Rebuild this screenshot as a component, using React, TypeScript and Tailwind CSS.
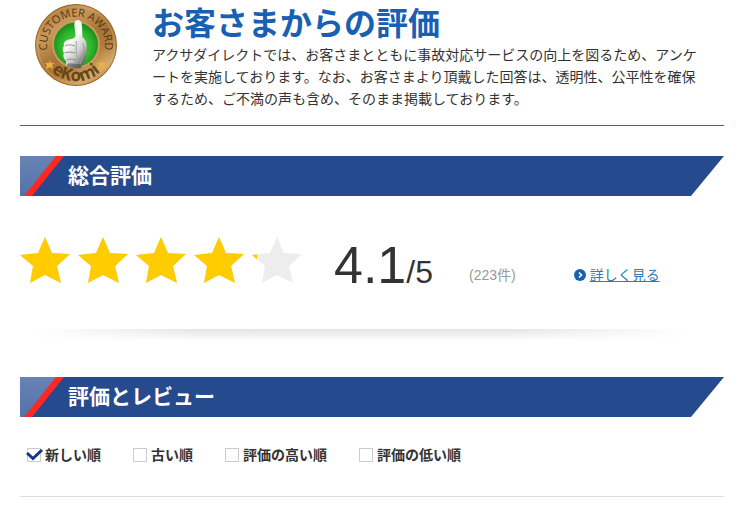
import { useState } from "react"

const STAR = "M25 0 L32 16 L50 17 L37 29 L41 46 L25 38 L10 46 L13 29 L0 18 L18 16 Z"

const sortOptions = ["新しい順", "古い順", "評価の高い順", "評価の低い順"]

function AwardBadge() {
    return (
        <svg className="w-[82px] h-[82px]" viewBox="0 0 82 82" role="img" aria-label="eKomi Customer Award">
            <defs>
                <linearGradient id="bronze" x1="0.15" y1="0" x2="0.85" y2="1">
                    <stop offset="0" stopColor="#a06c2c" />
                    <stop offset="0.25" stopColor="#c99a5c" />
                    <stop offset="0.5" stopColor="#a87438" />
                    <stop offset="0.65" stopColor="#b07a3c" />
                    <stop offset="0.85" stopColor="#d9ac6c" />
                    <stop offset="1" stopColor="#8f5a20" />
                </linearGradient>
                <radialGradient id="green" cx="0.5" cy="0.55" r="0.55">
                    <stop offset="0" stopColor="#4fd844" />
                    <stop offset="0.6" stopColor="#30b82c" />
                    <stop offset="1" stopColor="#14851b" />
                </radialGradient>
                <linearGradient id="hand" x1="0.2" y1="0" x2="0.8" y2="1">
                    <stop offset="0.4" stopColor="#fafafa" />
                    <stop offset="0.7" stopColor="#c8c8c8" />
                    <stop offset="1" stopColor="#4a4a4a" />
                </linearGradient>
                <path id="topArc" d="M13 49 A29 29 0 1 1 69 49" />
                <path id="bottomArc" d="M11 61 A36 36 0 0 0 71 61" />
            </defs>
            <circle cx="41" cy="41" r="40.5" fill="url(#bronze)" stroke="#98672b" />
            <circle cx="41" cy="41" r="38.5" fill="none" stroke="#dcae6b" strokeOpacity="0.5" />
            <circle cx="41" cy="40.5" r="23" fill="url(#green)" stroke="#c99b59" strokeWidth="2" />
            <path d="M39.5 19 C40 15 45.5 15 46.5 19 C47.5 24 47 29 47.5 33 C51 36 52.5 40 51.5 45 C52 50 51 55 48 59 L46 64 C40 65.500 34 64 31 61 L31 57 C28 54 28 51 29 49 C27 46 28 43 29 42 C28 38 31 36 34 35.500 C37 35 40 34.500 40.500 32 C40.500 27 39 23 39.500 19 Z" fill="url(#hand)" />
            <path d="M30 42 C34 40 37 41 40 42 M29.500 49 C33 47.500 37 48 40 49 M31.500 56 C35 54.500 38 55 41 56" fill="none" stroke="#8c8c8c" strokeWidth="1" />
            <path d="M41 37 C42 40 41 43 41 46 C42 51 42 55 43 60 M48 39 C49 45 49 52 45 60" fill="none" stroke="#a0a0a0" strokeWidth="1" />
            <path d="M32 60 C36 58 40 61 45 60 L45 63.500 C40 65 35 64 32 62 Z" fill="#555" fillOpacity="0.6" />
            <path d="M15 56 l1 3 4 0 -3 2 1 4 -3 -2 -4 2 1 -4 -2 -2 4 0 Z M67 56 l1 3 4 0 -3 2 1 4 -3 -2 -4 2 1 -4 -2 -2 4 0 Z" fill="#eeb23c" />
            <text fontFamily="Open Sans, sans-serif" fontSize="11" fontWeight="500" fill="#513a17">
                <textPath href="#topArc" startOffset="50%" textAnchor="middle">CUSTOMER AWARD</textPath>
            </text>
            <text fontFamily="Open Sans, sans-serif" fontSize="17" fontWeight="700" fill="#654615">
                <textPath href="#bottomArc" startOffset="50%" textAnchor="middle">eKomi</textPath>
            </text>
        </svg>
    )
}

function SectionTitle({ children }: { children: string }) {
    return (
        <div className="flex h-10 bg-[#254a8e] [clip-path:polygon(0_0,100%_0,calc(100%-33px)_100%,0_100%)]">
            <svg className="w-12 h-10 shrink-0" viewBox="0 0 48 40" aria-hidden="true">
                <defs>
                    <linearGradient id="corner" x1="0" y1="0" x2="0" y2="1">
                        <stop offset="0" stopColor="#6884b4" />
                        <stop offset="1" stopColor="#5372aa" />
                    </linearGradient>
                </defs>
                <path d="M0 0 H40 L8 40 H0 Z" fill="url(#corner)" />
                <path d="M36 0 H44 L12 40 H4 Z" fill="#ff2721" />
            </svg>
            <h2 className="text-[21px] leading-10 font-bold text-white">{children}</h2>
        </div>
    )
}

function Stars({ score }: { score: number }) {
    return (
        <div className="flex gap-2" role="img" aria-label={`${score} / 5`}>
            {[0, 1, 2, 3, 4].map((i) => {
                const filled = Math.min(1, Math.max(0, score - i)) * 50
                return (
                    <svg key={i} className="w-[50px] h-[46px]" viewBox="0 0 50 46">
                        <clipPath id={`star-${i}`}>
                            <rect width={filled} height="46" />
                        </clipPath>
                        <path d={STAR} fill="#ededed" />
                        <path d={STAR} fill="#ffcc00" clipPath={`url(#star-${i})`} />
                    </svg>
                )
            })}
        </div>
    )
}

export default function App() {
    const [sort, setSort] = useState(0)

    return (
        <main className="pl-5 pr-[14px] pb-3 bg-white text-[#333] font-['Liberation_Sans','Noto_Sans_CJK_JP',sans-serif]">
            <header className="flex gap-[35px] pl-[15px] pt-1 pb-[15px] border-b border-[#ff1a1f]">
                <div className="shrink-0">
                    <AwardBadge />
                </div>
                <div>
                    <h1 className="text-[32px] leading-10 font-bold text-[#1960b2]">お客さまからの評価</h1>
                    <p className="text-sm leading-[22px] pr-5">
                        アクサダイレクトでは、お客さまとともに事故対応サービスの向上を図るため、アンケートを実施しております。なお、お客さまより頂戴した回答は、透明性、公平性を確保するため、ご不満の声も含め、そのまま掲載しております。
                    </p>
                </div>
            </header>

            <section className="pt-[30px]">
                <SectionTitle>総合評価</SectionTitle>
                <div className="flex items-start pt-[41px] pb-9">
                    <Stars score={4.1} />
                    <p className="flex items-baseline ml-8 whitespace-nowrap">
                        <span className="text-[52px] leading-[56px]">4.1</span>
                        <span className="text-[32px] leading-8">/5</span>
                    </p>
                    <p className="mt-7 ml-9 text-sm text-[#999]">(223件)</p>
                    <a href="#reviews" className="mt-7 ml-[58px] flex items-center gap-1 text-sm text-[#337ab7] underline">
                        <svg className="w-3 h-3" viewBox="0 0 12 12" aria-hidden="true">
                            <circle cx="6" cy="6" r="6" fill="#1960b2" />
                            <path d="M5 3.5 L7.5 6 L5 8.5" fill="none" stroke="#fff" strokeWidth="1.5" />
                        </svg>
                        詳しく見る
                    </a>
                </div>
                <div className="h-3 bg-[linear-gradient(to_bottom,transparent,#fff),linear-gradient(to_right,#fff_2%,#e4e4e4_25%,#e4e4e4_70%,#fff_95%)]"></div>
            </section>

            <section id="reviews" className="pt-9">
                <SectionTitle>評価とレビュー</SectionTitle>
                <div className="flex gap-8 pl-[7px] pt-7 pb-[31px] border-b border-[#ddd]">
                    {sortOptions.map((label, i) => (
                        <label key={label} className="relative flex items-center gap-1 text-sm font-bold">
                            <input
                                type="checkbox"
                                checked={sort === i}
                                onChange={() => setSort(i)}
                                className="appearance-none w-[14px] h-[14px] border border-[#ccc] bg-white"
                            />
                            {sort === i && (
                                <svg className="absolute -left-px top-1 w-[17px] h-3 pointer-events-none" viewBox="0 0 17 12" aria-hidden="true">
                                    <path d="M1 4 L7 9.500 L16 1" fill="none" stroke="#17348a" strokeWidth="3" />
                                </svg>
                            )}
                            {label}
                        </label>
                    ))}
                </div>
            </section>
        </main>
    )
}
